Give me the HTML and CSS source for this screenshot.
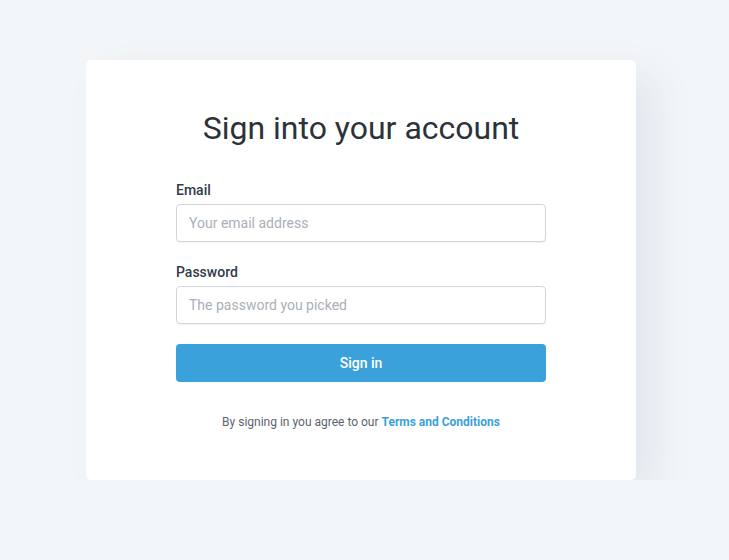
FILE: index.html
```html
<!DOCTYPE html>
<html>
<head>
<meta charset="utf-8">
<link rel="stylesheet" href="styles.css">
</head>
<body>
<div class="stage">
  <div class="card">
    <h1 class="title">Sign into your account</h1>
    <form class="form">
      <label class="label" for="email">Email</label>
      <input class="input" id="email" type="text" placeholder="Your email address">
      <label class="label label-second" for="password">Password</label>
      <input class="input" id="password" type="password" placeholder="The password you picked">
      <button class="button" type="button">Sign in</button>
    </form>
    <p class="terms">By signing in you agree to our <a class="terms-link" href="#">Terms and Conditions</a></p>
  </div>
</div>
</body>
</html>
```
FILE: styles.css
```css
html, body {
  margin: 0;
  padding: 0;
  background: #f2f6f9;
  font-family: Roboto, "Liberation Sans", sans-serif;
}
.stage {
  height: 480px;
  overflow: hidden;
  padding: 60px 0 0 86px;
  box-sizing: border-box;
}
.card {
  width: 550px;
  height: 420px;
  box-sizing: border-box;
  background: #fff;
  border-radius: 5px;
  box-shadow: 20px 15px 40px rgba(30, 60, 90, 0.08);
  padding: 48px 90px 0;
}
.title {
  margin: 0 0 34px;
  font-size: 32px;
  font-weight: 400;
  line-height: 40px;
  color: #2c3238;
  text-align: center;
}
.form {
  display: flex;
  flex-direction: column;
}
.label {
  font-size: 14px;
  font-weight: 500;
  line-height: 16px;
  color: #323b4c;
  margin-bottom: 6px;
}
.label-second {
  margin-top: 22px;
}
.input {
  height: 38px;
  box-sizing: border-box;
  border: 1px solid #d2d6dc;
  border-radius: 4px;
  padding: 0 12px;
  font-family: inherit;
  font-size: 14px;
  color: #2c3238;
  box-shadow: 0 1px 1px rgba(0, 0, 0, 0.05);
}
.input::placeholder {
  color: #a9b0b8;
}
.button {
  margin-top: 20px;
  height: 38px;
  border: none;
  border-radius: 4px;
  background: #3aa1db;
  color: #fff;
  font-family: inherit;
  font-size: 14px;
  font-weight: 500;
}
.terms {
  margin: 32px 0 0;
  text-align: center;
  font-size: 12px;
  line-height: 16px;
  color: #5b6470;
}
.terms-link {
  color: #3aa1db;
  font-weight: 700;
  text-decoration: none;
}
```
